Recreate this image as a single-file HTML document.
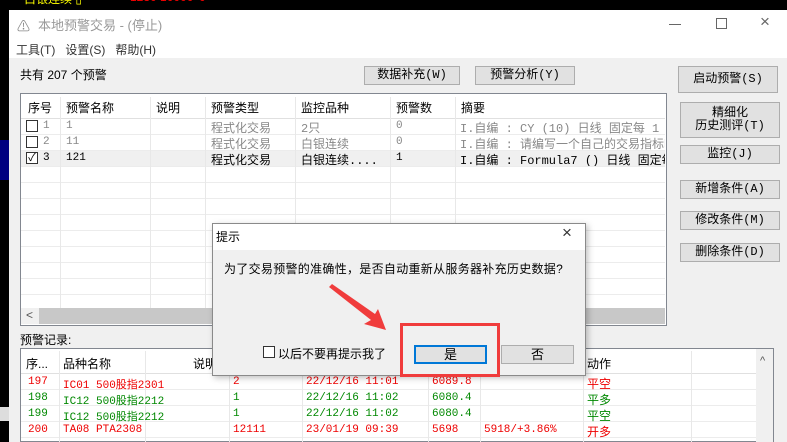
<!DOCTYPE html>
<html><head><meta charset="utf-8"><style>
*{margin:0;padding:0;box-sizing:border-box}
body{width:787px;height:442px;overflow:hidden;background:#000;position:relative;font-family:"Liberation Sans","Noto Sans CJK SC",sans-serif;font-size:12px;color:#000}
.a{position:absolute}
.btn{position:absolute;background:#e1e1e1;border:1px solid #adadad;text-align:center;font-size:12px;font-family:"Liberation Mono","Noto Sans CJK SC",monospace}
.t{white-space:nowrap;position:absolute}
.vl{position:absolute;width:1px;background:#e8e8e8}
.hl{position:absolute;height:1px;background:#ececec}
</style></head><body>
<div class="t" style="left:24px;top:-10px;color:#ff0;font-size:12px">白银连续 ▯</div>
<div class="t" style="left:130px;top:-10px;color:#f00">1230 10000</div>
<div class="t" style="left:192px;top:-10px;color:#f00">+0</div>
<div class="a" style="left:0;top:9px;width:9px;height:433px;background:#000"></div>
<div class="a" style="left:0;top:140px;width:9px;height:40px;background:#000080"></div>
<div class="a" style="left:9px;top:10px;width:778px;height:432px;background:#f0f0f0"></div>
<div class="a" style="left:9px;top:10px;width:778px;height:48px;background:#fff"></div>
<div class="t" style="left:17px;top:16px;color:#888;font-size:13px">&#9888;</div>
<div class="t" style="left:38px;top:15px;color:#999;font-size:13px">本地预警交易 - (停止)</div>
<div class="a" style="left:669px;top:24px;width:12px;height:1px;background:#666"></div>
<div class="a" style="left:716px;top:18px;width:11px;height:11px;border:1px solid #666"></div>
<div class="t" style="left:760px;top:12px;color:#666;font-size:17px">×</div>
<div class="t" style="left:16px;top:41px;color:#333;font-size:12px">工具(T)&nbsp;&nbsp;&nbsp;设置(S)&nbsp;&nbsp;&nbsp;帮助(H)</div>
<div class="t" style="left:20px;top:66px;font-size:12px">共有 207 个预警</div>
<div class="btn" style="left:364px;top:66px;width:96px;height:19px;line-height:17px">数据补充(W)</div>
<div class="btn" style="left:475px;top:66px;width:100px;height:19px;line-height:17px">预警分析(Y)</div>
<div class="btn" style="left:678px;top:66px;width:100px;height:27px;line-height:25px">启动预警(S)</div>
<div class="btn" style="left:680px;top:102px;width:100px;height:36px;line-height:13px;padding-top:4px">精细化<br>历史测评(T)</div>
<div class="btn" style="left:680px;top:145px;width:100px;height:19px;line-height:17px">监控(J)</div>
<div class="btn" style="left:680px;top:180px;width:100px;height:19px;line-height:17px">新增条件(A)</div>
<div class="btn" style="left:680px;top:211px;width:100px;height:19px;line-height:17px">修改条件(M)</div>
<div class="btn" style="left:680px;top:243px;width:100px;height:19px;line-height:17px">删除条件(D)</div>
<div class="a" style="left:20px;top:93px;width:647px;height:233px;background:#fff;border:1px solid #828790"></div>
<div class="a" style="left:21px;top:150px;width:644px;height:16px;background:#f0f0f0"></div>
<div class="hl" style="left:21px;top:118px;width:644px;background:#e0e0e0"></div>
<div class="hl" style="left:21px;top:134px;width:644px"></div>
<div class="hl" style="left:21px;top:150px;width:644px"></div>
<div class="hl" style="left:21px;top:166px;width:644px"></div>
<div class="hl" style="left:21px;top:182px;width:644px"></div>
<div class="hl" style="left:21px;top:198px;width:644px"></div>
<div class="hl" style="left:21px;top:214px;width:644px"></div>
<div class="hl" style="left:21px;top:230px;width:644px"></div>
<div class="hl" style="left:21px;top:246px;width:644px"></div>
<div class="hl" style="left:21px;top:262px;width:644px"></div>
<div class="hl" style="left:21px;top:278px;width:644px"></div>
<div class="hl" style="left:21px;top:294px;width:644px"></div>
<div class="vl" style="left:60px;top:97px;height:211px"></div>
<div class="vl" style="left:150px;top:97px;height:211px"></div>
<div class="vl" style="left:205px;top:97px;height:211px"></div>
<div class="vl" style="left:295px;top:97px;height:211px"></div>
<div class="vl" style="left:390px;top:97px;height:211px"></div>
<div class="vl" style="left:455px;top:97px;height:211px"></div>
<div class="t" style="left:28px;top:99px;font-size:12px">序号</div>
<div class="t" style="left:66px;top:99px">预警名称</div>
<div class="t" style="left:156px;top:99px">说明</div>
<div class="t" style="left:211px;top:99px">预警类型</div>
<div class="t" style="left:301px;top:99px">监控品种</div>
<div class="t" style="left:396px;top:99px">预警数</div>
<div class="t" style="left:461px;top:99px">摘要</div>
<div class="a" style="left:26px;top:120px;width:12px;height:12px;border:1px solid #333;background:#fff"></div>
<div class="a" style="left:26px;top:136px;width:12px;height:12px;border:1px solid #333;background:#fff"></div>
<div class="a" style="left:26px;top:152px;width:12px;height:12px;border:1px solid #333;background:#fff;font-size:11px;line-height:10px;text-align:center">✓</div>
<div style="font-family:'Liberation Mono','Noto Sans CJK SC',monospace;font-size:11px">
<div class="t" style="left:43px;top:120px;color:#888">1</div><div class="t" style="left:66px;top:120px;color:#888">1</div>
<div class="t" style="left:211px;top:119px;color:#888;font-size:12px">程式化交易</div><div class="t" style="left:301px;top:119px;color:#888;font-size:12px">2只</div>
<div class="t" style="left:396px;top:120px;color:#888">0</div>
<div class="t" style="left:43px;top:136px;color:#888">2</div><div class="t" style="left:66px;top:136px;color:#888">11</div>
<div class="t" style="left:211px;top:135px;color:#888;font-size:12px">程式化交易</div><div class="t" style="left:301px;top:135px;color:#888;font-size:12px">白银连续</div>
<div class="t" style="left:396px;top:136px;color:#888">0</div>
<div class="t" style="left:43px;top:152px">3</div><div class="t" style="left:66px;top:152px">121</div>
<div class="t" style="left:211px;top:151px;font-size:12px">程式化交易</div><div class="t" style="left:301px;top:151px;font-size:12px">白银连续....</div>
<div class="t" style="left:396px;top:152px">1</div>
<div class="a" style="left:456px;top:118px;width:209px;height:48px;overflow:hidden;font-size:12px">
<div class="t" style="left:4px;top:1px;color:#888">I.自编 : CY (10) 日线 固定每 1 秒钟</div>
<div class="t" style="left:4px;top:17px;color:#888">I.自编 : 请编写一个自己的交易指标吧</div>
<div class="t" style="left:4px;top:33px">I.自编 : Formula7 () 日线 固定每 1</div>
</div>
</div>
<div class="a" style="left:21px;top:308px;width:644px;height:16px;background:#f0f0f0"></div>
<div class="a" style="left:39px;top:308px;width:626px;height:16px;background:#c8c8c8"></div>
<div class="t" style="left:26px;top:308px;color:#555;font-size:12px">&lt;</div>
<div class="t" style="left:20px;top:331px">预警记录:</div>
<div class="a" style="left:20px;top:348px;width:754px;height:94px;background:#fff;border:1px solid #828790"></div>
<div class="a" style="left:756px;top:349px;width:17px;height:93px;background:#f0f0f0"></div>
<div class="t" style="left:760px;top:355px;color:#555;font-size:11px">^</div>
<div class="hl" style="left:21px;top:373px;width:735px;background:#e0e0e0"></div>
<div class="hl" style="left:21px;top:389px;width:735px"></div>
<div class="hl" style="left:21px;top:405px;width:735px"></div>
<div class="hl" style="left:21px;top:421px;width:735px"></div>
<div class="hl" style="left:21px;top:437px;width:735px"></div>
<div class="vl" style="left:59px;top:351px;height:91px"></div>
<div class="vl" style="left:145px;top:351px;height:91px"></div>
<div class="vl" style="left:229px;top:351px;height:91px"></div>
<div class="vl" style="left:302px;top:351px;height:91px"></div>
<div class="vl" style="left:428px;top:351px;height:91px"></div>
<div class="vl" style="left:480px;top:351px;height:91px"></div>
<div class="vl" style="left:583px;top:351px;height:91px"></div>
<div class="vl" style="left:691px;top:351px;height:91px"></div>
<div class="t" style="left:26px;top:355px">序...</div><div class="t" style="left:63px;top:355px">品种名称</div><div class="t" style="left:193px;top:355px">说明</div><div class="t" style="left:587px;top:355px">动作</div>
<div style="font-family:'Liberation Mono','Noto Sans CJK SC',monospace;font-size:11px">
<div style="color:#e00"><div class="t" style="left:28px;top:376px">197</div><div class="t" style="left:63px;top:376px">IC01 500股指2301</div><div class="t" style="left:233px;top:376px">2</div><div class="t" style="left:306px;top:376px">22/12/16 11:01</div><div class="t" style="left:432px;top:376px">6089.8</div><div class="t" style="left:587px;top:375px;font-size:12px">平空</div></div>
<div style="color:#080"><div class="t" style="left:28px;top:392px">198</div><div class="t" style="left:63px;top:392px">IC12 500股指2212</div><div class="t" style="left:233px;top:392px">1</div><div class="t" style="left:306px;top:392px">22/12/16 11:02</div><div class="t" style="left:432px;top:392px">6080.4</div><div class="t" style="left:587px;top:391px;font-size:12px">平多</div></div>
<div style="color:#080"><div class="t" style="left:28px;top:408px">199</div><div class="t" style="left:63px;top:408px">IC12 500股指2212</div><div class="t" style="left:233px;top:408px">1</div><div class="t" style="left:306px;top:408px">22/12/16 11:02</div><div class="t" style="left:432px;top:408px">6080.4</div><div class="t" style="left:587px;top:407px;font-size:12px">平空</div></div>
<div style="color:#e00"><div class="t" style="left:28px;top:424px">200</div><div class="t" style="left:63px;top:424px">TA08 PTA2308</div><div class="t" style="left:233px;top:424px">12111</div><div class="t" style="left:306px;top:424px">23/01/19 09:39</div><div class="t" style="left:432px;top:424px">5698</div><div class="t" style="left:484px;top:424px">5918/+3.86%</div><div class="t" style="left:587px;top:423px;font-size:12px">开多</div></div>
</div>
<div class="a" style="left:0;top:407px;width:9px;height:14px;background:#ddd"></div>
<div class="a" style="left:212px;top:223px;width:374px;height:153px;background:#f0f0f0;border:1px solid #8a8a8a;box-shadow:2px 2px 6px rgba(0,0,0,.25)"></div>
<div class="a" style="left:213px;top:224px;width:372px;height:26px;background:#fff"></div>
<div class="t" style="left:216px;top:228px;font-size:12px">提示</div>
<div class="t" style="left:562px;top:223px;font-size:17px;color:#333">×</div>
<div class="t" style="left:224px;top:260px;font-size:12px;letter-spacing:0.3px">为了交易预警的准确性，是否自动重新从服务器补充历史数据?</div>
<div class="a" style="left:263px;top:346px;width:12px;height:12px;border:1px solid #333;background:#fff"></div>
<div class="t" style="left:278px;top:345px;font-size:12px">以后不要再提示我了</div>
<div class="a" style="left:414px;top:345px;width:73px;height:19px;background:#e1e1e1;border:2px solid #0078d7;text-align:center;line-height:15px;font-size:13px">是</div>
<div class="a" style="left:501px;top:345px;width:73px;height:19px;background:#e1e1e1;border:1px solid #adadad;text-align:center;line-height:17px;font-size:13px">否</div>
<div class="a" style="left:400px;top:323px;width:100px;height:54px;border:3px solid #f03c3c"></div>
<svg class="a" style="left:320px;top:280px" width="70" height="55"><polygon points="9,7 12,4 55,34 58,29 66,50 44,44 51,40" fill="#f03c3c"/></svg>
</body></html>
